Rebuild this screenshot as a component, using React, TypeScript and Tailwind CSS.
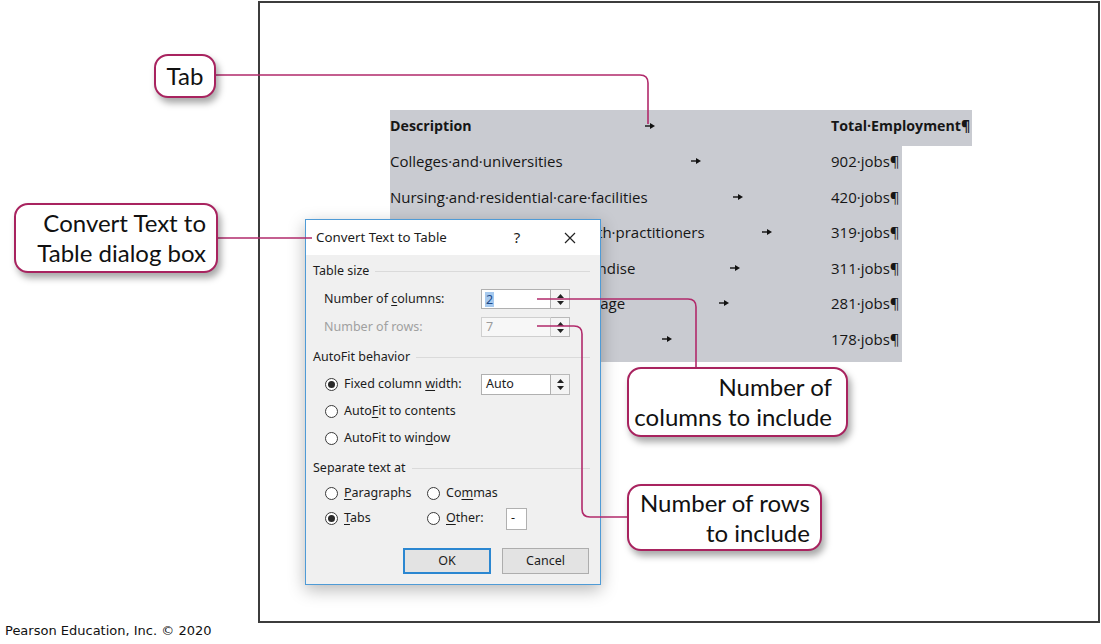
import React from "react";

const ROWS = [
  { desc: "Colleges·and·universities", w: "w-[300px]", jobs: "902·jobs¶" },
  { desc: "Nursing·and·residential·care·facilities", w: "w-[342px]", jobs: "420·jobs¶" },
  { desc: "Offices·of·physicians·and·health·practitioners", w: "w-[371px]", jobs: "319·jobs¶" },
  { desc: "General·and·specialty·merchandise", w: "w-[339px]", jobs: "311·jobs¶" },
  { desc: "Bulky·goods·warehousing·storage", w: "w-[328px]", jobs: "281·jobs¶" },
  { desc: "Religious·organizations", w: "w-[271px]", jobs: "178·jobs¶" },
];

function TabArrow() {
  return (
    <svg width="12" height="8" viewBox="0 0 12 8" className="shrink-0">
      <line x1="1" y1="4" x2="7" y2="4" stroke="#111" strokeWidth="1.4" />
      <polygon points="6,1 11,4 6,7" fill="#111" />
    </svg>
  );
}

function Spinner() {
  return (
    <div className="w-[19px] self-stretch border border-l-0 border-[#b9b9b9] bg-[#f4f4f4] flex flex-col items-center justify-center gap-[3px]">
      <svg width="7" height="4" viewBox="0 0 7 4"><polygon points="0,4 3.5,0 7,4" fill="#222" /></svg>
      <svg width="7" height="4" viewBox="0 0 7 4"><polygon points="0,0 3.5,4 7,0" fill="#222" /></svg>
    </div>
  );
}

function Radio({ on }: { on?: boolean }) {
  return (
    <span className="w-[13px] h-[13px] rounded-full border border-[#3a3a3a] bg-white flex items-center justify-center shrink-0">
      {on && <span className="w-[7px] h-[7px] rounded-full bg-[#2a2a2a]" />}
    </span>
  );
}

function GroupLabel({ children }: { children: React.ReactNode }) {
  return (
    <div className="h-[20px] flex items-center gap-[6px] pr-[10px]">
      <span>{children}</span>
      <div className="flex-1 h-px bg-[#dadada]" />
    </div>
  );
}

function Callout({ className, lines, center }: { className: string; lines: string[]; center?: boolean }) {
  return (
    <div
      className={
        "absolute bg-white border-2 border-[#a8235f] rounded-[14px] shadow-[3px_5px_7px_rgba(0,0,0,0.35)] flex flex-col justify-center font-['Lato',sans-serif] text-[24px] leading-[30px] text-[#111] " +
        (center ? "items-center " : "items-end ") +
        className
      }
    >
      {lines.map((l) => (
        <span key={l} className="whitespace-nowrap">{l}</span>
      ))}
    </div>
  );
}

export default function App() {
  return (
    <div className="relative w-[1101px] h-[644px] bg-white overflow-hidden">
      {/* Document frame */}
      <div className="ml-[258px] mt-[1px] w-[842px] h-[622px] border-2 border-[#3c3c3c]">
        <div className="pl-[130px] pt-[107px] flex flex-col font-['Open_Sans',sans-serif] text-[15px] text-[#161616]">
          <div className="w-[582px] h-[36px] bg-[#c9cbd1] flex items-start pt-[6px] leading-[20px] font-bold text-[14.2px]">
            <div className="w-[441px] flex items-center">
              <span className="w-[254px] whitespace-nowrap">Description</span>
              <TabArrow />
            </div>
            <span className="whitespace-nowrap">Total·Employment¶</span>
          </div>
          {ROWS.map((r) => (
            <div key={r.jobs} className="w-[512px] h-[35.5px] last:h-[38.5px] bg-[#c9cbd1] flex items-start pt-[5px] leading-[20px]">
              <div className="w-[441px] flex items-center">
                <span className={"whitespace-nowrap " + r.w}>{r.desc}</span>
                <TabArrow />
              </div>
              <span className="whitespace-nowrap">{r.jobs}</span>
            </div>
          ))}
        </div>
      </div>

      {/* Footer */}
      <div className="pl-[5px] leading-[16px] text-[13px] font-['DejaVu_Sans',sans-serif] text-[#111]">
        Pearson Education, Inc. © 2020
      </div>

      {/* Dialog */}
      <div className="absolute left-[305px] top-[219px] w-[296px] h-[366px] border border-[#4f9bd6] bg-[#f0f0f0] shadow-[0_5px_16px_rgba(0,0,0,0.28)] flex flex-col font-['Noto_Sans',sans-serif] text-[12.5px] text-[#1c1c1c]">
        <div className="h-[35px] bg-white flex items-center pl-[10px] text-[13.3px] shrink-0">
          <span className="w-[195px] whitespace-nowrap">Convert Text to Table</span>
          <span className="w-[12px] text-center text-[15px]">?</span>
          <svg width="12" height="12" viewBox="0 0 12 12" className="ml-[41px]">
            <path d="M1 1 L11 11 M11 1 L1 11" stroke="#222" strokeWidth="1.2" />
          </svg>
        </div>
        <div className="flex flex-col pl-[7px] pt-[6px]">
          <GroupLabel>Table size</GroupLabel>
          <div className="mt-[4px] h-[28px] flex items-center pl-[11px]">
            <span className="w-[157px] whitespace-nowrap">
              Number of <u className="underline-offset-2">c</u>olumns:
            </span>
            <div className="h-[20px] flex">
              <div className="w-[70px] border border-[#b0b0b0] bg-white flex items-center pl-[3px]">
                <span className="bg-[#a6c9ee] text-[#1d4a8a] px-[1px] leading-[15px]">2</span>
              </div>
              <Spinner />
            </div>
          </div>
          <div className="h-[28px] flex items-center pl-[11px] text-[#a0a0a0]">
            <span className="w-[157px] whitespace-nowrap">Number of rows:</span>
            <div className="h-[20px] flex">
              <div className="w-[70px] border border-[#cfcfcf] bg-[#f7f7f7] flex items-center pl-[4px] text-[#9c9c9c]">7</div>
              <Spinner />
            </div>
          </div>

          <div className="mt-[6px]">
            <GroupLabel>AutoFit behavior</GroupLabel>
          </div>
          <div className="mt-[4px] h-[27px] flex items-center pl-[12px] gap-[6px]">
            <Radio on />
            <span className="w-[131px] whitespace-nowrap">
              Fixed column <u className="underline-offset-2">w</u>idth:
            </span>
            <div className="h-[21px] flex">
              <div className="w-[70px] border border-[#b0b0b0] bg-white flex items-center pl-[4px]">Auto</div>
              <Spinner />
            </div>
          </div>
          <div className="h-[27px] flex items-center pl-[12px] gap-[6px]">
            <Radio />
            <span>
              Auto<u className="underline-offset-2">F</u>it to contents
            </span>
          </div>
          <div className="h-[27px] flex items-center pl-[12px] gap-[6px]">
            <Radio />
            <span>
              AutoFit to win<u className="underline-offset-2">d</u>ow
            </span>
          </div>

          <div className="mt-[6px]">
            <GroupLabel>Separate text at</GroupLabel>
          </div>
          <div className="mt-[3px] h-[25px] flex items-center pl-[12px]">
            <div className="w-[102px] flex items-center gap-[6px]">
              <Radio />
              <span>
                <u className="underline-offset-2">P</u>aragraphs
              </span>
            </div>
            <div className="flex items-center gap-[6px]">
              <Radio />
              <span>
                Co<u className="underline-offset-2">m</u>mas
              </span>
            </div>
          </div>
          <div className="h-[25px] flex items-center pl-[12px]">
            <div className="w-[102px] flex items-center gap-[6px]">
              <Radio on />
              <span>
                <u className="underline-offset-2">T</u>abs
              </span>
            </div>
            <div className="flex items-center gap-[6px]">
              <Radio />
              <span className="w-[54px]">
                <u className="underline-offset-2">O</u>ther:
              </span>
              <div className="w-[21px] h-[22px] border border-[#b0b0b0] bg-white flex items-center pl-[4px]">-</div>
            </div>
          </div>

          <div className="mt-[17px] flex justify-end gap-[11px] pr-[11px]">
            <div className="w-[88px] h-[26px] border-2 border-[#2b87d1] bg-[#e3e3e3] flex items-center justify-center">OK</div>
            <div className="w-[87px] h-[26px] border border-[#adadad] bg-[#e3e3e3] flex items-center justify-center">Cancel</div>
          </div>
        </div>
      </div>

      {/* Leader lines */}
      <svg className="absolute inset-0 pointer-events-none" width="1101" height="644" viewBox="0 0 1101 644">
        <g fill="none" stroke="#b12a6b" strokeWidth="1.6">
          <path d="M216 75 H640 Q648 75 648 83 V124" />
          <path d="M218 238 H312" />
          <path d="M537 299 H688 Q696 299 696 307 V367" />
          <path d="M537 326 H574 Q582 326 582 334 V509 Q582 517 590 517 H627" />
        </g>
      </svg>

      {/* Callouts */}
      <Callout className="left-[154px] top-[54px] w-[62px] h-[44px]" center lines={["Tab"]} />
      <Callout className="left-[14px] top-[203px] w-[204px] h-[70px] pr-[10px]" lines={["Convert Text to", "Table dialog box"]} />
      <Callout className="left-[627px] top-[367px] w-[221px] h-[70px] pr-[14px]" lines={["Number of", "columns to include"]} />
      <Callout className="left-[627px] top-[484px] w-[195px] h-[67px] pr-[10px]" lines={["Number of rows", "to include"]} />
    </div>
  );
}
